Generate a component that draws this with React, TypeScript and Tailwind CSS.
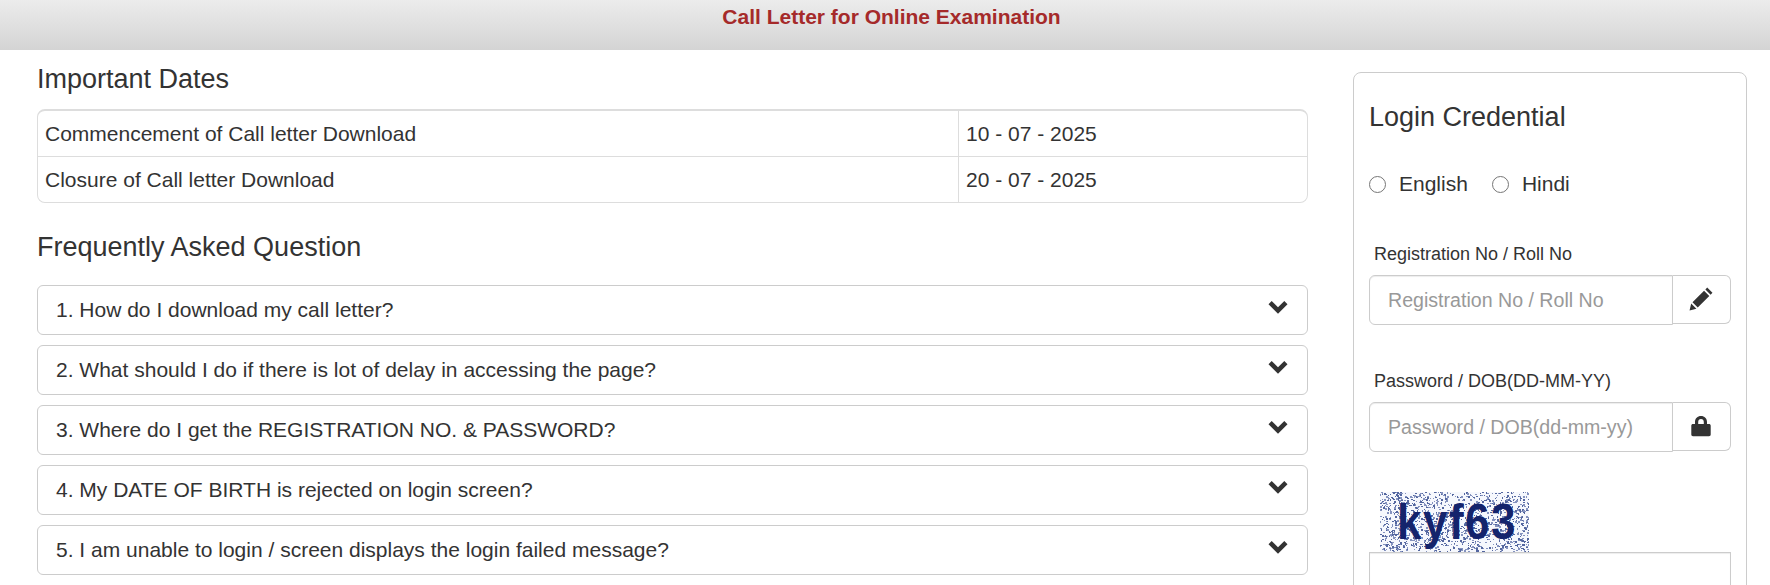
import React from "react";

const QUESTIONS = [
  "1. How do I download my call letter?",
  "2. What should I do if there is lot of delay in accessing the page?",
  "3. Where do I get the REGISTRATION NO. & PASSWORD?",
  "4. My DATE OF BIRTH is rejected on login screen?",
  "5. I am unable to login / screen displays the login failed message?",
];

function ChevronDown() {
  return (
    <svg width="20" height="14" viewBox="0 0 20 14" className="shrink-0">
      <path d="M0.5 4.2 L3.7 1 L10 7.3 L16.3 1 L19.5 4.2 L10 13.7 Z" fill="#333" />
    </svg>
  );
}

function Pencil() {
  return (
    <svg width="24" height="24" viewBox="0 0 22 22" className="mr-[2px] mb-[2px]">
      <path d="M0.5 21.5 L2 15.2 L6.8 20 Z M3.2 14 L13.8 3.4 L18.6 8.2 L8 18.8 Z M15 2.2 L16.7 0.5 L21.5 5.3 L19.8 7 Z" fill="#333" />
    </svg>
  );
}

function Lock() {
  return (
    <svg width="20" height="22" viewBox="0 0 20 21" className="mr-[2px] mb-[2px]">
      <path
        fillRule="evenodd"
        d="M4 8.5 V6.5 C4 3 6.5 0.5 10 0.5 C13.5 0.5 16 3 16 6.5 V8.5 H18 C19 8.5 19.7 9.2 19.7 10.2 V19 C19.7 20 19 20.7 18 20.7 H2 C1 20.7 0.3 20 0.3 19 V10.2 C0.3 9.2 1 8.5 2 8.5 Z M7.2 8.5 H12.8 V6.5 C12.8 4.8 11.7 3.6 10 3.6 C8.3 3.6 7.2 4.8 7.2 6.5 Z"
        fill="#333"
      />
    </svg>
  );
}

// speckled background of the captcha image, fixed seed so it stays the same
function CaptchaNoise() {
  const dots: React.ReactElement[] = [];
  let seed = 17;
  const next = () => {
    seed = (seed * 16807) % 2147483647;
    return seed / 2147483647;
  };
  for (let i = 0; i < 1500; i++) {
    dots.push(
      <rect
        key={i}
        x={Math.floor(next() * 149)}
        y={Math.floor(next() * 60)}
        width={next() > 0.5 ? 2 : 1}
        height={next() > 0.7 ? 2 : 1}
        fill={next() > 0.5 ? "#53669f" : "#8593bf"}
      />
    );
  }
  return (
    <svg width="149" height="60" viewBox="0 0 149 60" className="absolute inset-0">
      {dots}
    </svg>
  );
}

function InputRow({ placeholder, icon }: { placeholder: string; icon: React.ReactNode }) {
  return (
    <div className="flex h-[50px] w-[362px]">
      <input
        placeholder={placeholder}
        className="h-[50px] w-[304px] rounded-l-[6px] border border-[#ccc] pr-[17px] pl-[18px] text-[19.6px] text-[#555] shadow-[inset_0_1px_1px_rgba(0,0,0,0.075)] outline-none placeholder:text-[#999]"
      />
      <div className="flex h-[49px] w-[58px] items-center justify-center rounded-r-[6px] border border-l-0 border-[#ccc]">
        {icon}
      </div>
    </div>
  );
}

export default function App() {
  return (
    <div className="h-[585px] overflow-hidden bg-white font-['Liberation_Sans',Arial,sans-serif] text-[#333]">
      {/* Title bar */}
      <div className="flex h-[50px] justify-center bg-gradient-to-b from-[#ececec] to-[#d4d4d4] pt-[6px] pl-[13px]">
        <h1 className="text-[21px] leading-[22px] font-bold text-[#a52a2a]">Call Letter for Online Examination</h1>
      </div>

      <div className="flex pl-[37px]">
        {/* Left column */}
        <div className="w-[1271px]">
          <h2 className="mt-[14px] text-[27px] leading-[30px]">Important Dates</h2>

          <div className="mt-[15px] rounded-[8px] border border-t-2 border-[#ddd] text-[21px]">
            <div className="flex h-[46px] items-center border-b border-[#ddd]">
              <div className="flex h-full w-[921px] items-center border-r border-[#ddd] pl-[7px]">
                Commencement of Call letter Download
              </div>
              <div className="pl-[7px]">10 - 07 - 2025</div>
            </div>
            <div className="flex h-[45px] items-center">
              <div className="flex h-full w-[921px] items-center border-r border-[#ddd] pl-[7px]">
                Closure of Call letter Download
              </div>
              <div className="pl-[7px]">20 - 07 - 2025</div>
            </div>
          </div>

          <h2 className="mt-[29px] text-[27px] leading-[30px]">Frequently Asked Question</h2>

          <div className="mt-[23px] flex flex-col gap-[10px]">
            {QUESTIONS.map((q) => (
              <div
                key={q}
                className="flex h-[50px] items-center justify-between rounded-[6px] border border-[#ccc] pr-[19px] pl-[18px] text-[21px]"
              >
                <span>{q}</span>
                <div className="pb-[6px]">
                  <ChevronDown />
                </div>
              </div>
            ))}
          </div>
        </div>

        {/* Login card */}
        <div className="mt-[22px] ml-[45px] h-[600px] w-[394px] rounded-[8px] border border-[#ccc] px-[15px]">
          <h2 className="mt-[29px] text-[27px] leading-[30px]">Login Credential</h2>

          <div className="mt-[40px] flex h-[24px] items-center text-[21px]">
            <span className="h-[17px] w-[17px] rounded-full border border-[#767676]" />
            <span className="ml-[13px]">English</span>
            <span className="ml-[24px] h-[17px] w-[17px] rounded-full border border-[#767676]" />
            <span className="ml-[13px]">Hindi</span>
          </div>

          <label className="mt-[48px] ml-[5px] block text-[18px] leading-[20px]">Registration No / Roll No</label>
          <div className="mt-[11px]">
            <InputRow placeholder="Registration No / Roll No" icon={<Pencil />} />
          </div>

          <label className="mt-[46px] ml-[5px] block text-[18px] leading-[20px]">Password / DOB(DD-MM-YY)</label>
          <div className="mt-[11px]">
            <InputRow placeholder="Password / DOB(dd-mm-yy)" icon={<Lock />} />
          </div>

          {/* Captcha */}
          <div className="relative mt-[40px] ml-[11px] h-[60px] w-[149px] overflow-hidden bg-[#f6f8fd]">
            <CaptchaNoise />
            <span className="absolute top-[3px] left-[17px] origin-top scale-y-[1.15] text-[44px] leading-[46px] font-bold tracking-[1.5px] text-[#14246c]">
              kyf63
            </span>
          </div>
          <div className="h-[50px] w-[362px] border border-[#ccc] shadow-[inset_0_1px_1px_rgba(0,0,0,0.075)]" />
        </div>
      </div>
    </div>
  );
}
